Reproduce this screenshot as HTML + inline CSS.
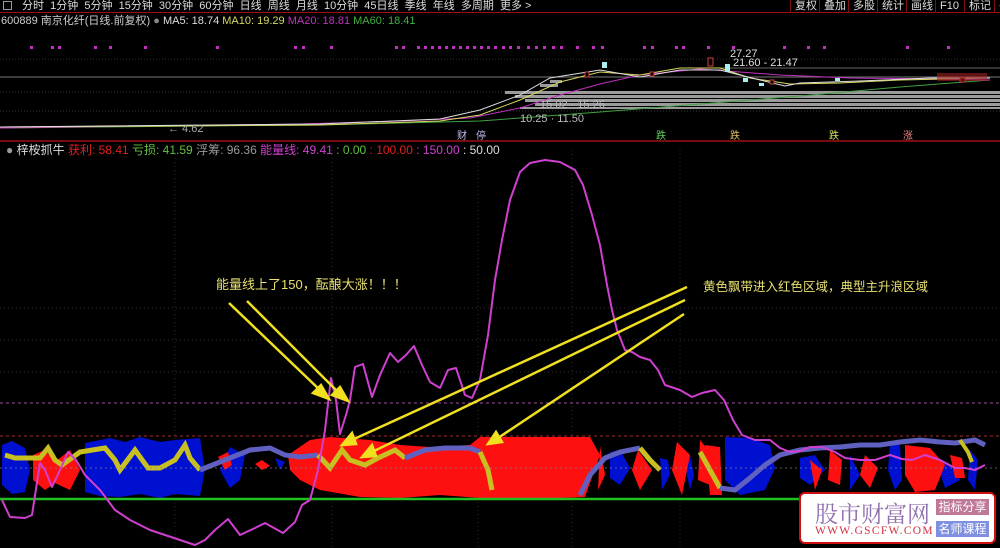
<!DOCTYPE html>
<html><head><meta charset="utf-8"><style>
*{margin:0;padding:0;box-sizing:border-box}
body{width:1000px;height:548px;background:#000;overflow:hidden;position:relative;font-family:"Liberation Sans","Noto Sans CJK SC",sans-serif;color:#ddd}
.t{position:absolute;white-space:nowrap}
#bar{position:absolute;left:0;top:0;width:1000px;height:13px;border-bottom:1px solid #a01010;font-size:11px;line-height:12px}
.btn{position:absolute;top:0;height:13px;border-left:1px solid #801010;font-size:11px;line-height:12px;padding-left:4px;color:#ddd}
</style></head><body>
<div id="bar">
<span class="t" style="left:3px;top:1px;width:9px;height:9px;border:1px solid #999"></span>
<span class="t" style="left:22px;top:0">分时&nbsp; 1分钟&nbsp; 5分钟&nbsp; 15分钟&nbsp; 30分钟&nbsp; 60分钟&nbsp; 日线&nbsp; 周线&nbsp; 月线&nbsp; 10分钟&nbsp; 45日线&nbsp; 季线&nbsp; 年线&nbsp; 多周期&nbsp; 更多 &gt;</span>
</div>
<span class="btn" style="left:790px">复权</span><span class="btn" style="left:819px">叠加</span><span class="btn" style="left:848px">多股</span><span class="btn" style="left:877px">统计</span><span class="btn" style="left:906px">画线</span><span class="btn" style="left:935px">F10</span><span class="btn" style="left:964px">标记</span><span class="btn" style="left:994px">+</span>
<div class="t" style="left:1px;top:15px;font-size:11px;line-height:13px"><span style="color:#ccc">600889 南京化纤(日线.前复权)</span> <span style="color:#888">●</span> <span style="color:#ddd">MA5: 18.74</span> <span style="color:#d8d860">MA10: 19.29</span> <span style="color:#c030c0">MA20: 18.81</span> <span style="color:#40b040">MA60: 18.41</span></div>

<svg class="t" style="left:0;top:0" width="1000" height="548">
<!-- top chart -->
<g fill="#c030c0">
<rect x="30" y="46" width="3" height="3"/><rect x="51" y="46" width="3" height="3"/><rect x="58" y="46" width="3" height="3"/><rect x="94" y="46" width="3" height="3"/><rect x="109" y="46" width="3" height="3"/><rect x="144" y="46" width="3" height="3"/><rect x="216" y="46" width="3" height="3"/><rect x="294" y="46" width="3" height="3"/><rect x="302" y="46" width="3" height="3"/><rect x="330" y="46" width="3" height="3"/><rect x="395" y="46" width="3" height="3"/><rect x="402" y="46" width="3" height="3"/>
<rect x="417" y="46" width="3" height="3"/><rect x="424" y="46" width="3" height="3"/><rect x="431" y="46" width="3" height="3"/><rect x="438" y="46" width="3" height="3"/><rect x="445" y="46" width="3" height="3"/><rect x="452" y="46" width="3" height="3"/><rect x="459" y="46" width="3" height="3"/><rect x="466" y="46" width="3" height="3"/><rect x="473" y="46" width="3" height="3"/><rect x="480" y="46" width="3" height="3"/><rect x="487" y="46" width="3" height="3"/><rect x="494" y="46" width="3" height="3"/><rect x="502" y="46" width="3" height="3"/><rect x="509" y="46" width="3" height="3"/><rect x="517" y="46" width="3" height="3"/><rect x="527" y="46" width="3" height="3"/><rect x="535" y="46" width="3" height="3"/><rect x="543" y="46" width="3" height="3"/><rect x="552" y="46" width="3" height="3"/><rect x="560" y="46" width="3" height="3"/><rect x="576" y="46" width="3" height="3"/><rect x="592" y="46" width="3" height="3"/><rect x="601" y="46" width="3" height="3"/><rect x="643" y="46" width="3" height="3"/><rect x="651" y="46" width="3" height="3"/><rect x="675" y="46" width="3" height="3"/><rect x="682" y="46" width="3" height="3"/><rect x="707" y="46" width="3" height="3"/><rect x="732" y="46" width="3" height="3"/><rect x="783" y="46" width="3" height="3"/><rect x="807" y="46" width="3" height="3"/><rect x="823" y="46" width="3" height="3"/><rect x="906" y="46" width="3" height="3"/><rect x="947" y="46" width="3" height="3"/>
</g>
<line x1="0" y1="77" x2="1000" y2="77" stroke="#777" stroke-width="1"/>
<line x1="715" y1="68" x2="1000" y2="68" stroke="#666" stroke-width="1"/>
<g stroke="#333" stroke-dasharray="1,2"><line x1="0" y1="59" x2="1000" y2="59"/><line x1="0" y1="92" x2="1000" y2="92"/><line x1="0" y1="111" x2="1000" y2="111"/></g>
<g fill="#9a9a9a">
<rect x="505" y="91" width="495" height="3"/><rect x="515" y="95" width="485" height="3"/><rect x="525" y="99" width="475" height="3"/><rect x="535" y="103" width="465" height="3"/><rect x="520" y="107" width="480" height="2"/><rect x="540" y="84" width="18" height="3"/><rect x="550" y="80" width="12" height="3"/>
</g>
<polyline fill="none" stroke="#40a040" points="0,128 200,126 320,125 480,121 600,112 700,104 800,96 900,87 990,80"/>
<polyline fill="none" stroke="#c030c0" points="0,128 300,124 400,121 470,118 520,108 560,95 600,84 640,75 700,69 780,75 850,78 940,79 990,80"/>
<polyline fill="none" stroke="#d8d860" points="0,127 320,125 440,121 480,115 520,100 560,82 600,72 640,75 680,68 720,68 750,78 790,84 840,83 900,80 990,78"/>
<polyline fill="none" stroke="#ddd" points="0,127 320,124 440,119 480,110 520,95 550,78 600,70 640,77 680,70 720,70 760,80 785,86 800,83 860,81 930,78 990,78"/>
<g fill="#000" stroke="#d04040"><rect x="585" y="72" width="4" height="5"/><rect x="708" y="58" width="5" height="8"/><rect x="770" y="80" width="4" height="4"/><rect x="650" y="72" width="4" height="4"/><rect x="960" y="78" width="5" height="4"/></g>
<g fill="#aee" ><rect x="602" y="62" width="5" height="6"/><rect x="725" y="64" width="5" height="8"/><rect x="743" y="78" width="5" height="4"/><rect x="759" y="83" width="5" height="3"/><rect x="835" y="78" width="5" height="3"/></g>
<g font-size="11" fill="#ddd" font-family="Liberation Sans,sans-serif"><text x="730" y="57">27.27</text><text x="733" y="66">21.60 - 21.47</text><text x="168" y="132" fill="#aaa">← 4.62</text><text x="520" y="122" fill="#bbb">10.25 · 11.50</text><text x="540" y="108" fill="#bbb">15.02 · 15.26</text></g>
<g font-size="10" font-family="Noto Sans CJK SC,sans-serif"><text x="457" y="139" fill="#c0c0f0">财</text><text x="476" y="139" fill="#c0c0f0">停</text><text x="656" y="139" fill="#60d060">跌</text><text x="730" y="139" fill="#e0c060">跌</text><text x="829" y="139" fill="#e0e060">跌</text><text x="903" y="139" fill="#f08080">涨</text></g>
<line x1="0" y1="141" x2="1000" y2="141" stroke="#a01010" stroke-width="1.5"/>
<rect x="937" y="73" width="50" height="8" fill="#a02020" opacity="0.6"/>

<!-- lower grid -->
<g stroke="#2a2a2a" stroke-dasharray="1,3"><line x1="332" y1="150" x2="332" y2="548"/><line x1="478" y1="150" x2="478" y2="548"/><line x1="572" y1="150" x2="572" y2="548"/><line x1="680" y1="150" x2="680" y2="548"/><line x1="175" y1="150" x2="175" y2="548"/><line x1="0" y1="308" x2="1000" y2="308"/><line x1="0" y1="340" x2="1000" y2="340"/><line x1="0" y1="372" x2="1000" y2="372"/></g>
<line x1="0" y1="403" x2="1000" y2="403" stroke="#a050a0" stroke-dasharray="3,3"/>
<line x1="0" y1="436" x2="1000" y2="436" stroke="#a03030" stroke-dasharray="3,3"/>

<!-- bands -->
<g fill="#0010d0">
<polygon points="2,445 12,441 25,448 30,470 25,492 12,494 2,485"/>
<polygon points="85,443 110,438 125,442 140,437 160,442 175,440 200,438 205,470 200,496 175,494 160,498 140,494 120,497 100,496 85,492"/>
<polygon points="230,447 245,455 240,480 230,488 220,470"/>
<polygon points="275,458 285,462 280,470"/>
<polygon points="610,452 620,450 630,468 620,485 610,478"/>
<polygon points="660,458 668,460 670,475 662,490"/>
<polygon points="690,455 694,475 690,490 686,470"/>
<polygon points="725,437 750,438 770,445 775,468 765,490 740,495 725,480"/>
<polygon points="800,458 815,455 825,470 810,485 800,478"/>
<polygon points="850,455 860,475 850,490"/>
<polygon points="890,442 900,445 902,480 895,490 888,470"/>
<polygon points="935,458 950,465 960,480 945,488"/>
<polygon points="970,450 978,460 975,490 968,480"/>
</g>
<g fill="#ff1010">
<polygon points="33,455 45,450 55,462 70,450 80,470 70,490 55,483 45,490 33,480"/>
<polygon points="218,457 228,452 232,465 225,470"/>
<polygon points="255,464 262,460 270,466 262,470"/>
<polygon points="288,455 310,440 330,437 370,440 400,445 430,447 470,445 480,437 590,437 600,455 585,497 560,498 520,498 480,498 440,495 400,498 360,497 320,490 300,480 290,470"/>
<polygon points="600,446 605,475 598,490"/>
<polygon points="638,450 652,470 640,490 632,470"/>
<polygon points="677,442 690,455 682,495 672,470"/>
<polygon points="700,440 712,455 710,485 698,480"/>
<polygon points="705,445 720,447 722,495 710,495"/>
<polygon points="810,460 822,470 815,490"/>
<polygon points="830,450 842,460 840,485 828,480"/>
<polygon points="865,455 878,468 870,488 860,475"/>
<polygon points="905,445 930,448 945,465 935,490 915,492 905,475"/>
<polygon points="950,455 962,458 965,478 955,478"/>
</g>
<!-- ribbons -->
<polyline fill="none" stroke="#c8c020" stroke-width="5" points="5,455 15,458 40,458 48,448 55,460 62,465 80,452 105,448 115,460 120,470 135,450 148,468 160,468 175,460 185,445 190,458 200,470"/>
<polyline fill="none" stroke="#6060c0" stroke-width="5" points="200,470 225,460 250,450 270,448 285,455 300,457 318,455"/>
<polyline fill="none" stroke="#c8c020" stroke-width="5" points="318,455 330,468 342,450 350,460 365,465 378,458 395,450 405,458"/>
<polyline fill="none" stroke="#6060c0" stroke-width="5" points="405,458 425,450 445,448 470,448 480,452"/>
<polyline fill="none" stroke="#c8c020" stroke-width="5" points="480,452 488,470 492,490"/>
<polyline fill="none" stroke="#6060c0" stroke-width="5" points="580,495 590,475 605,458 620,452 640,448"/>
<polyline fill="none" stroke="#c8c020" stroke-width="5" points="640,448 650,460 660,470"/>
<polyline fill="none" stroke="#c8c020" stroke-width="5" points="700,452 710,470 720,488"/>
<polyline fill="none" stroke="#6060c0" stroke-width="5" points="720,488 735,490 750,478 765,465 780,455 800,450 820,448 840,447 860,445 880,445 900,442 920,440 940,442 955,443 975,440 985,445"/>
<polyline fill="none" stroke="#c8c020" stroke-width="4" points="960,440 968,452 972,462"/>
<line x1="0" y1="499" x2="800" y2="499" stroke="#20c020" stroke-width="2.5"/>
<line x1="0" y1="468" x2="1000" y2="468" stroke="#8080a0" stroke-dasharray="2,3" opacity="0.7"/>

<!-- energy line -->
<polyline fill="none" stroke="#d040d0" stroke-width="2" stroke-linejoin="round" points="2,500 10,517 25,518 32,515 40,463 45,470 52,487 60,470 68,452 76,460 85,475 100,490 115,510 130,520 150,530 165,535 180,540 195,545 205,540 215,530 228,519 240,535 255,528 265,523 283,533 295,522 302,505 310,500 318,470 325,430 331,378 336,400 340,434 346,415 350,400 355,367 363,364 372,397 380,375 390,353 398,362 406,355 414,346 422,365 430,382 440,388 448,370 456,368 465,395 472,398 480,380 488,335 495,280 502,240 510,200 520,172 530,163 545,160 560,162 575,170 583,185 592,215 600,245 607,285 612,310 617,330 625,350 632,352 640,357 650,360 658,370 665,385 680,390 692,397 702,393 715,390 724,400 733,420 742,435 755,440 770,440 780,448 790,452 800,451 810,447 822,447 835,452 845,458 860,460 875,460 890,455 902,459 912,460 925,455 940,460 955,468 965,468 975,470 985,465"/>

<!-- arrows -->
<g stroke="#f0e020" stroke-width="2.5" fill="#f0e020">
<line x1="229" y1="303" x2="322" y2="392"/><polygon points="329,399 313,393 321,385"/>
<line x1="247" y1="301" x2="340" y2="394"/><polygon points="348,401 332,395 340,387"/>
<line x1="687" y1="287" x2="352" y2="440"/><polygon points="342,445 352,433 356,444"/>
<line x1="685" y1="300" x2="372" y2="452"/><polygon points="362,457 372,445 376,456"/>
<line x1="684" y1="314" x2="498" y2="438"/><polygon points="488,444 496,432 502,442"/>
</g>
</svg>

<div class="t" style="left:6px;top:143px;font-size:12px;line-height:14px"><span style="color:#999">●</span> <span style="color:#ddd">梓桉抓牛</span> <span style="color:#e02020">获利</span><span style="color:#e02020">: 58.41</span> <span style="color:#60c040">亏损: 41.59</span> <span style="color:#999">浮筹: 96.36</span> <span style="color:#d040d0">能量线: 49.41</span> <span style="color:#60c040">: 0.00</span> <span style="color:#e02020">: 100.00</span> <span style="color:#d040d0">: 150.00</span> <span style="color:#ddd">: 50.00</span></div>
<div class="t" style="left:216px;top:274px;font-size:13px;color:#e8e070">能量线上了150，酝酿大涨！！！</div>
<div class="t" style="left:703px;top:276px;font-size:12.5px;color:#e8e070">黄色飘带进入红色区域，典型主升浪区域</div>

<div class="t" style="left:799px;top:492px;width:197px;height:52px;background:#fff;border:2px solid #d01010;border-radius:6px">
<div class="t" style="left:14px;top:2px;font-size:23px;color:#9070b0;font-family:'Noto Serif CJK SC',serif">股市财富网</div>
<div class="t" style="left:14px;top:31px;font-size:11.5px;color:#d03040;font-family:'Liberation Serif',serif;letter-spacing:1.3px">WWW.GSCFW.COM</div>
<div class="t" style="left:135px;top:5px;width:53px;height:16px;background:#c07898;color:#fff;font-size:12px;line-height:16px;text-align:center">指标分享</div>
<div class="t" style="left:135px;top:27px;width:53px;height:16px;background:#8090e0;color:#fff;font-size:12px;line-height:16px;text-align:center">名师课程</div>
</div>
</body></html>
